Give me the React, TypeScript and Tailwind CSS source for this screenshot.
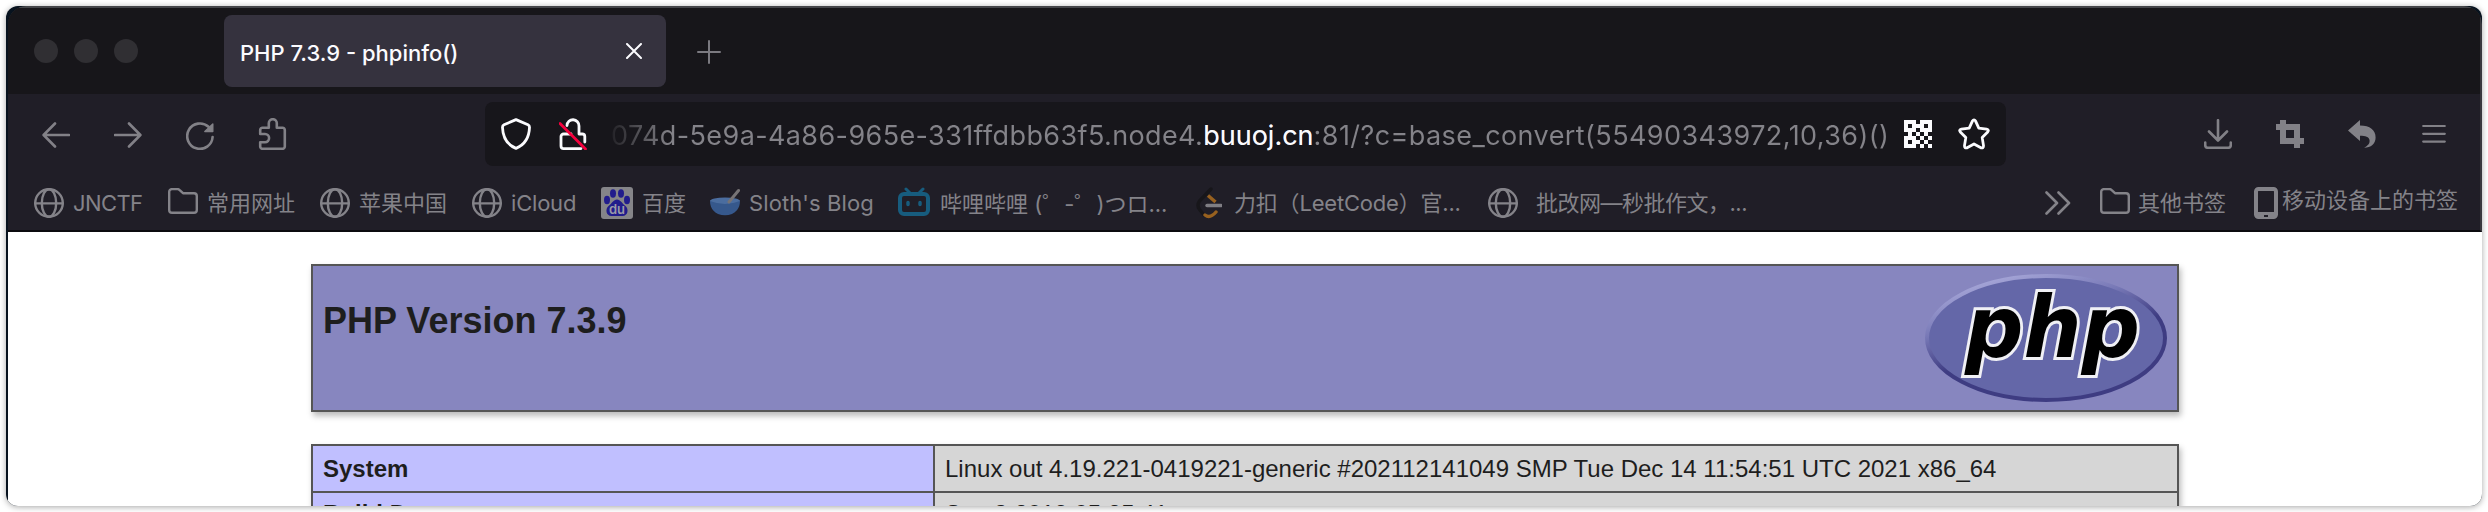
import type { ReactNode } from "react";

type IconProps = { w: number; h: number; className?: string; sw?: number; children: ReactNode };

function Icon({ w, h, className = "", sw = 2.6, children }: IconProps) {
  return (
    <svg
      width={w}
      height={h}
      viewBox={`0 0 ${w} ${h}`}
      fill="none"
      stroke="currentColor"
      strokeWidth={sw}
      strokeLinecap="round"
      strokeLinejoin="round"
      className={`shrink-0 ${className}`}
    >
      {children}
    </svg>
  );
}

const Globe = ({ className = "" }: { className?: string }) => (
  <Icon w={30} h={30} className={className} sw={2.4}>
    <circle cx="15" cy="15" r="13.8" />
    <ellipse cx="15" cy="15" rx="7.2" ry="13.8" />
    <path d="M1.2 15.4H28.8" />
  </Icon>
);

const Folder = ({ className = "" }: { className?: string }) => (
  <Icon w={30} h={26} className={className} sw={2.4}>
    <path d="M1.2 22V3.8A2.7 2.7 0 0 1 3.9 1.1H9.5a3 3 0 0 1 2.2 1L15 5.2H26a2.8 2.8 0 0 1 2.8 2.8V22a2.8 2.8 0 0 1-2.8 2.8H4A2.8 2.8 0 0 1 1.2 22Z" />
  </Icon>
);

const QR = ["111.111", "1.111.1", "111.111", ".1.1.1.", "111.1.1", "1.11.1.", "111.1.1"];

function TitleBar() {
  return (
    <div className="flex h-[86px] items-center bg-[#17161a] pl-[26px]">
      <div className="flex gap-4">
        <span className="size-6 rounded-full bg-[#302f33]" />
        <span className="size-6 rounded-full bg-[#302f33]" />
        <span className="size-6 rounded-full bg-[#302f33]" />
      </div>
      <div className="ml-[86px] flex h-[72px] w-[442px] items-center justify-between rounded-lg bg-[#35323e] pr-6 pl-4 text-[#fbfbfe]">
        <span className="pt-1 text-[22px] font-medium whitespace-nowrap">PHP 7.3.9 - phpinfo()</span>
        <Icon w={16} h={16} sw={2}>
          <path d="M1 1L15 15M15 1L1 15" />
        </Icon>
      </div>
      <Icon w={24} h={24} sw={2} className="mt-0.5 ml-[31px] text-[#7b7a80]">
        <path d="M12 1V23M1 12H23" />
      </Icon>
    </div>
  );
}

function UrlBar() {
  return (
    <div className="ml-[197px] flex h-16 w-[1521px] items-center rounded-lg bg-[#17161b] pl-4 text-[#fbfbfe]">
      <Icon w={30} h={32} sw={2.8}>
        <path d="M15 1.6L27 6.8Q28.6 7.6 28.5 9.4C28.2 19 24 26.6 15 30.4C6 26.6 1.8 19 1.5 9.4Q1.4 7.6 3 6.8Z" />
      </Icon>
      <Icon w={28} h={32} sw={2.8} className="ml-7">
        <path d="M8 7.5A6 6 0 0 1 20 8V16H23.2A2.6 2.6 0 0 1 25.8 18.6V24M12 16H4.6A2.6 2.6 0 0 0 2 18.6V28A2.6 2.6 0 0 0 4.6 30.6H22" />
        <path d="M1 5.5L26.5 31" className="stroke-[#f5003d]" />
      </Icon>
      <div className="mt-[3px] ml-6 w-[1277px] overflow-hidden bg-[linear-gradient(90deg,#232227_0px,#48474c_22px,#848389_60px)] bg-clip-text text-[27px] leading-9 whitespace-nowrap text-transparent">
        <span className="tracking-[0.39px]">074d-5e9a-4a86-965e-331ffdbb63f5.node4.</span>
        <span className="text-[#fbfbfe]">buuoj.cn</span>
        <span className="tracking-[0.42px]">:81/?c=base_convert(55490343972,10,36)()</span>
      </div>
      <Icon w={28} h={28} className="ml-4">
        {QR.map((row, y) =>
          row
            .split("")
            .map((c, x) =>
              c === "1" ? <rect key={`${x}-${y}`} x={x * 4} y={y * 4} width="4" height="4" fill="currentColor" stroke="none" /> : null,
            ),
        )}
      </Icon>
      <Icon w={32} h={32} sw={2.8} className="ml-[26px]">
        <path d="M14.4 3.1Q16 0.6 17.6 3.1L20.8 10.2L28.6 11.2Q31.4 11.8 29.7 14L24.2 19.6L25.5 27.6Q25.6 30.6 22.9 29.8L16 26L9.1 29.8Q6.4 30.6 6.5 27.6L7.8 19.6L2.3 14Q0.6 11.8 3.4 11.2L11.2 10.2Z" />
      </Icon>
    </div>
  );
}

function NavBar() {
  return (
    <div className="flex h-20 items-center pl-[34px] text-[#828187]">
      <Icon w={28} h={26} className="mt-0.5">
        <path d="M27 13H2M13 1.5L1.6 13L13 24.5" />
      </Icon>
      <Icon w={28} h={26} className="mt-0.5 ml-11">
        <path d="M1 13H26M15 1.5L26.4 13L15 24.5" />
      </Icon>
      <Icon w={28} h={28} className="mt-1 ml-11">
        <path d="M26.6 15A12.7 12.7 0 1 1 22.5 4.8" />
        <path d="M26.8 2V9.6H18.8Z" fill="currentColor" strokeWidth="1.4" />
      </Icon>
      <Icon w={30} h={32} className="ml-11">
        <path d="M2.2 16V12A2.2 2.2 0 0 1 4.4 9.8H10.8V5.2A4 4 0 0 1 18.8 5.2V9.8H24.6A2.2 2.2 0 0 1 26.8 12V28.6A2.2 2.2 0 0 1 24.6 30.8H4.4A2.2 2.2 0 0 1 2.2 28.6V24.2H7A4.1 4.1 0 0 0 7 16Z" />
      </Icon>
      <UrlBar />
      <Icon w={28} h={30} className="ml-[198px]">
        <path d="M14 1.2V21M5 12.5L14 21.5L23 12.5M1.2 23.5V26A2.8 2.8 0 0 0 4 28.8H24A2.8 2.8 0 0 0 26.8 26V23.5" />
      </Icon>
      <Icon w={28} h={28} className="ml-11">
        <path
          d="M4 0H10V4H24V18H28V24H24V28H18V24H4V10H0V4H4ZM10 10V18H18V10Z"
          fill="currentColor"
          fillRule="evenodd"
          stroke="none"
        />
      </Icon>
      <Icon w={28} h={28} className="ml-11">
        <path d="M0 10.5L12 0V5.5C22 5.5 27.6 10 27.6 17.5C27.6 24 23 27.8 16 27.8C20.5 25.5 22 23 21.5 20C21 17 17.5 15.8 12 15.8V21Z" fill="currentColor" stroke="none" />
      </Icon>
      <Icon w={24} h={20} className="ml-[46px]" sw={2.2}>
        <path d="M1.2 2H22.8M1.2 9.8H22.8M1.2 17.6H22.8" />
      </Icon>
    </div>
  );
}

const Label = ({ className, children }: { className: string; children: ReactNode }) => (
  <span className={`shrink-0 whitespace-nowrap ${className}`}>{children}</span>
);

function Bookmarks() {
  return (
    <div className="flex h-14 items-center pt-0.5 pl-[26px] text-[22px] leading-8 text-[#848389]">
      <Globe />
      <Label className="ml-[9px] w-[95px] tracking-[-0.6px]">JNCTF</Label>
      <Folder className="mb-1" />
      <Label className="ml-[9px] w-[113px]">常用网址</Label>
      <Globe />
      <Label className="ml-[9px] w-[113px]">苹果中国</Label>
      <Globe />
      <Label className="ml-[9px] w-[90px] tracking-[-0.2px]">iCloud</Label>
      <Icon w={32} h={32} sw={0}>
        <rect width="32" height="32" rx="3" fill="#858589" />
        <g fill="#211c8c">
          <ellipse cx="6" cy="13" rx="3" ry="4.2" />
          <ellipse cx="12" cy="6.5" rx="3" ry="4.2" />
          <ellipse cx="20" cy="6.5" rx="3" ry="4.2" />
          <ellipse cx="26" cy="13" rx="3" ry="4.2" />
          <path d="M16 12.5C19.5 12.5 21 16.5 24.5 19C28 22 27 29 21.5 29H10.5C5 29 4 22 7.5 19C11 16.5 12.5 12.5 16 12.5Z" />
        </g>
        <text x="8" y="27" fontSize="13" fontWeight="600" fill="#9a9aa8">du</text>
      </Icon>
      <Label className="ml-[9px] w-[68px]">百度</Label>
      <Icon w={30} h={28} sw={0} className="mb-0.5">
        <ellipse cx="15" cy="13" rx="15" ry="3.5" fill="#4b6d9f" />
        <path d="M0 13C0 21 5 24.5 8 26Q15 28.5 22 26C25 24.5 30 21 30 13Q15 19 0 13Z" fill="#36588c" />
        <path d="M19 14L28.5 2.5" stroke="#767375" strokeWidth="3" />
      </Icon>
      <Label className="ml-[9px] w-[149px] tracking-[0.1px]">Sloth's Blog</Label>
      <Icon w={32} h={30} sw={4} className="mb-0.5 text-[#175c7e]">
        <rect x="2" y="7" width="28" height="20" rx="4" />
        <path d="M8 2L12 6M25 2L21 6" strokeWidth="3" />
        <path d="M10 15.5V17.5M22 15.5V17.5" strokeWidth="3.5" />
      </Icon>
      <Label className="ml-[10px] w-[256px]">哔哩哔哩 (<span lang="ja" className="font-['Noto_Sans_CJK_JP']">゜</span>-<span lang="ja" className="font-['Noto_Sans_CJK_JP']">゜</span>)つロ...</Label>
      <Icon w={26} h={32} sw={3.4}>
        <path d="M15 2L3.5 14Q0.5 18.5 3.5 22.5L8 28" stroke="#17161a" />
        <path d="M12 8.5L19.5 15" stroke="#98611f" strokeLinecap="butt" />
        <path d="M9 28Q14 32 20 25" stroke="#98611f" />
        <path d="M11 18.5H25" stroke="#7f7e84" />
      </Icon>
      <Label className="ml-3 w-[254px] tracking-[-0.2px]">力扣（LeetCode）官...</Label>
      <Globe />
      <Label className="ml-[18px] w-[509px] tracking-[-0.5px]">批改网—秒批作文，...</Label>
      <Icon w={26} h={24}>
        <path d="M1.5 1.5L12 12L1.5 22.5M13.5 1.5L24 12L13.5 22.5" />
      </Icon>
      <Folder className="mb-1 ml-[29px]" />
      <Label className="ml-2 w-[116px]">其他书签</Label>
      <Icon w={24} h={32} sw={4}>
        <path d="M2 4.5A2.5 2.5 0 0 1 4.5 2H19.5A2.5 2.5 0 0 1 22 4.5V27.5A2.5 2.5 0 0 1 19.5 30H4.500A2.5 2.5 0 0 1 2 27.5Z" />
        <path d="M2 28H22" strokeWidth="6" strokeLinecap="butt" />
        <path d="M10 29H14" stroke="#201e27" strokeWidth="2" strokeLinecap="butt" />
      </Icon>
      <Label className="ml-1 pb-1.5">移动设备上的书签</Label>
    </div>
  );
}

function PhpLogo() {
  return (
    <svg width="242" height="128" viewBox="0 0 242 128" className="shrink-0">
      <defs>
        <linearGradient id="rim" x1="0.25" y1="0" x2="0.75" y2="1">
          <stop offset="0" stopColor="#a9a9da" />
          <stop offset="0.3" stopColor="#7677b5" />
          <stop offset="0.55" stopColor="#3e3c82" />
          <stop offset="1" stopColor="#3e3c82" />
        </linearGradient>
      </defs>
      <ellipse cx="121" cy="64" rx="119" ry="62" fill="#6467a8" stroke="url(#rim)" strokeWidth="4" />
      <text
        x="40"
        y="83"
        textLength="175"
        lengthAdjust="spacingAndGlyphs"
        fontSize="86"
        fontWeight="700"
        fontStyle="italic"
        fontFamily="'DejaVu Sans', sans-serif"
        fill="#000"
        stroke="#f0f0f5"
        strokeWidth="6"
        paintOrder="stroke"
      >
        php
      </text>
    </svg>
  );
}

function InfoRow({ name, value, leading = "leading-[45px]" }: { name: string; value: string; leading?: string }) {
  return (
    <div className={`flex h-[47px] border-b-2 border-[#555] text-2xl whitespace-nowrap ${leading}`}>
      <div className="w-[622px] border-r-2 border-[#555] bg-[#c0bfff] pl-[10px] font-bold">{name}</div>
      <div className="flex-1 bg-[#d6d6d6] pl-[10px]">{value}</div>
    </div>
  );
}

function PhpInfo() {
  return (
    <div className="h-[274px] overflow-hidden bg-white pt-8 pl-[303px] font-['Liberation_Sans',sans-serif] text-[#1e1e1e]">
      <div className="flex h-[148px] w-[1868px] justify-between border-2 border-[#555] bg-[#8786bf] px-[10px] py-2 shadow-[2px_4px_6px_#bbb]">
        <h1 className="pt-[27px] text-4xl leading-10 font-bold">PHP Version 7.3.9</h1>
        <PhpLogo />
      </div>
      <div className="mt-8 w-[1868px] border-2 border-[#555] shadow-[2px_4px_6px_#bbb]">
        <InfoRow name="System" value="Linux out 4.19.221-0419221-generic #202112141049 SMP Tue Dec 14 11:54:51 UTC 2021 x86_64" />
        <InfoRow name="Build Date" value="Sep 3 2019 05:25:41" leading="leading-[42px]" />
      </div>
    </div>
  );
}

export default function App() {
  return (
    <div className="h-[512px] w-[2488px] overflow-hidden bg-white p-1.5 font-[Inter,'Noto_Sans_CJK_SC',sans-serif]" lang="zh-CN">
      <div className="h-[500px] overflow-hidden rounded-xl bg-[#08131f] pl-0.5 shadow-[0_1px_6px_rgba(0,0,0,0.35)]">
        <div className="overflow-hidden rounded-tl-[18px] rounded-tr-[18px]">
          <div className="h-[226px] rounded-t-[18px] border-t-2 border-r-2 border-b-2 border-t-[#45464a] border-r-[#3a393f] border-b-[#0c0b0f] bg-[#201e27]">
            <TitleBar />
            <NavBar />
            <Bookmarks />
          </div>
          <PhpInfo />
        </div>
      </div>
    </div>
  );
}
